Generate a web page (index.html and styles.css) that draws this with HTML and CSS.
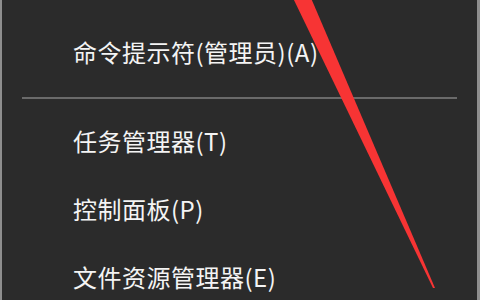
FILE: index.html
```html
<!DOCTYPE html>
<html>
<head>
<meta charset="utf-8">
<link rel="stylesheet" href="styles.css">
</head>
<body>
<div class="menu">
  <div class="item">命令提示符(管理员)(A)</div>
  <div class="sep"></div>
  <div class="item">任务管理器(T)</div>
  <div class="item">控制面板(P)</div>
  <div class="item">文件资源管理器(E)</div>
  <svg class="arrow" width="480" height="300" viewBox="0 0 480 300">
    <polygon points="293,-2 311,-2 435,288 433,288" fill="#f73434"/>
  </svg>
</div>
</body>
</html>
```
FILE: styles.css
```css
html, body {
  margin: 0;
  padding: 0;
  background: #2b2b2b;
}
.menu {
  position: relative;
  width: 480px;
  height: 300px;
  box-sizing: border-box;
  border-left: 2px solid #8e8e8e;
  border-right: 3px solid #8e8e8e;
  background: #2b2b2b;
  padding-top: 18px;
  overflow: hidden;
  font-family: "Noto Sans CJK SC", "Microsoft YaHei", sans-serif;
  color: #f4f4f4;
}
.item {
  height: 68px;
  display: flex;
  align-items: center;
  padding-left: 71px;
  font-size: 24px;
  letter-spacing: 0.5px;
  line-height: 1;
  white-space: nowrap;
}
.sep {
  height: 2px;
  background: #6a6a6a;
  margin: 11px 20px 8px 20px;
}
.arrow {
  position: absolute;
  left: -2px;
  top: 0;
  pointer-events: none;
}
```
